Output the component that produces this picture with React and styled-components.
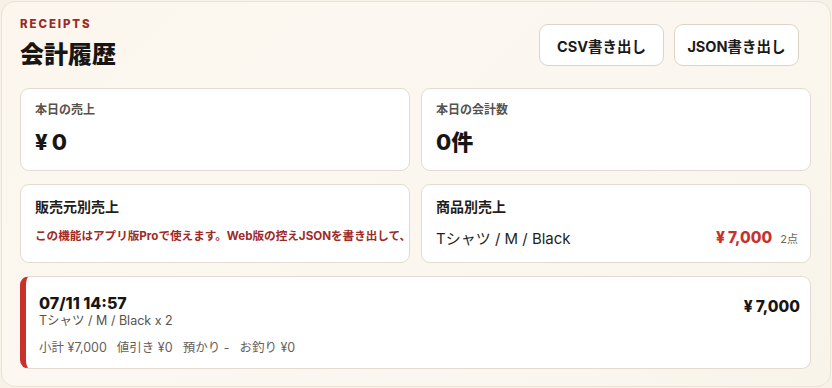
import React from "react";
import styled, { createGlobalStyle } from "styled-components";

const GlobalStyle = createGlobalStyle`
  html, body {
    margin: 0;
    padding: 0;
    background: #f7f1e8;
  }
  body {
    font-family: "Inter", "Noto Sans CJK JP", sans-serif;
    color: #1c1a18;
  }
  * {
    box-sizing: border-box;
  }
`;

const Panel = styled.section`
  margin: 1px;
  height: 386px;
  border: 1px solid #ebe3d6;
  border-radius: 14px;
  background: linear-gradient(135deg, #fcf6ee 0%, #fbf7f0 60%, #f9f4ea 100%);
  padding: 15px 19px 0 18px;
  overflow: hidden;
`;

const Header = styled.header`
  display: flex;
  justify-content: space-between;
  align-items: flex-start;
  padding-right: 12px;
`;

const Eyebrow = styled.div`
  font-size: 11.5px;
  line-height: 14px;
  font-weight: 800;
  letter-spacing: 1.9px;
  color: #9c2a26;
`;

const Title = styled.h1`
  margin: 9px 0 0;
  font-size: 24px;
  line-height: 30px;
  font-weight: 800;
  color: #181614;
`;

const Actions = styled.div`
  display: flex;
  gap: 10px;
  margin-top: 7px;
`;

const Button = styled.button`
  height: 42px;
  min-width: 125px;
  padding: 0 12px;
  background: #fff;
  border: 1px solid #ddd4c6;
  border-radius: 9px;
  font-family: inherit;
  font-size: 14.5px;
  font-weight: 700;
  color: #1c1a18;
  cursor: pointer;
`;

const Grid = styled.div`
  display: grid;
  grid-template-columns: 1fr 1fr;
  column-gap: 11px;
  row-gap: 13px;
  margin-top: 18px;
`;

const Card = styled.div`
  background: #fff;
  border: 1px solid #e3dbcf;
  border-radius: 9px;
  padding: ${(p) => (p.stat ? "13px 14px 14px" : "13px 12px 13px 14px")};
  min-width: 0;
  overflow: hidden;
`;

const StatLabel = styled.div`
  font-size: 12px;
  line-height: 16px;
  font-weight: 600;
  color: #57524c;
`;

const StatValue = styled.div`
  margin-top: 10px;
  font-size: 22px;
  line-height: 28px;
  font-weight: 800;
  color: #181614;
`;

const Yen = styled.span`
  padding-right: ${(p) => p.gap || 2}px;
`;

const CardTitle = styled.div`
  font-size: 14px;
  line-height: 18px;
  font-weight: 700;
  color: #1f1c19;
`;

const Notice = styled.div`
  margin-top: 12px;
  font-size: 11.6px;
  line-height: 16px;
  font-weight: 700;
  color: #9e2a25;
  white-space: nowrap;
`;

const ProductRow = styled.div`
  margin-top: 12px;
  display: flex;
  align-items: center;
  justify-content: space-between;
  line-height: 20px;
`;

const ProductName = styled.span`
  font-size: 15px;
  color: #221f1c;
`;

const ProductSum = styled.span`
  display: flex;
  align-items: baseline;
  gap: 8px;
`;

const RedAmount = styled.span`
  font-size: 15.5px;
  font-weight: 800;
  color: #c8322b;
`;

const Count = styled.span`
  font-size: 11px;
  color: #6a645d;
`;

const Receipt = styled.div`
  margin-top: 13px;
  display: flex;
  justify-content: space-between;
  background: #fff;
  border: 1px solid #e3dbcf;
  border-left: 6px solid #c8322b;
  border-radius: 9px;
  padding: 16px 10px 12px 13px;
`;

const ReceiptDate = styled.div`
  font-size: 16px;
  line-height: 20px;
  font-weight: 800;
  color: #181614;
`;

const ReceiptItems = styled.div`
  font-size: 12.5px;
  line-height: 16px;
  color: #57524c;
`;

const Breakdown = styled.div`
  margin-top: 11px;
  display: flex;
  gap: 10px;
  font-size: 12.5px;
  line-height: 16px;
  color: #66605a;
`;

const ReceiptTotal = styled.div`
  margin-top: 4px;
  font-size: 15.5px;
  line-height: 20px;
  font-weight: 800;
  color: #181614;
`;

export default function App() {
  return (
    <>
      <GlobalStyle />
      <Panel>
        <Header>
          <div>
            <Eyebrow>RECEIPTS</Eyebrow>
            <Title>会計履歴</Title>
          </div>
          <Actions>
            <Button>CSV書き出し</Button>
            <Button>JSON書き出し</Button>
          </Actions>
        </Header>

        <Grid>
          <Card stat>
            <StatLabel>本日の売上</StatLabel>
            <StatValue>
              <Yen gap={4}>¥</Yen>0
            </StatValue>
          </Card>
          <Card stat>
            <StatLabel>本日の会計数</StatLabel>
            <StatValue>0件</StatValue>
          </Card>
          <Card>
            <CardTitle>販売元別売上</CardTitle>
            <Notice>
              この機能はアプリ版Proで使えます。Web版の控えJSONを書き出して、アプリで読み込んでください。
            </Notice>
          </Card>
          <Card>
            <CardTitle>商品別売上</CardTitle>
            <ProductRow>
              <ProductName>Tシャツ / M / Black</ProductName>
              <ProductSum>
                <RedAmount>
                  <Yen gap={3}>¥</Yen>7,000
                </RedAmount>
                <Count>2点</Count>
              </ProductSum>
            </ProductRow>
          </Card>
        </Grid>

        <Receipt>
          <div>
            <ReceiptDate>07/11 14:57</ReceiptDate>
            <ReceiptItems>Tシャツ / M / Black x 2</ReceiptItems>
            <Breakdown>
              <span>小計 ¥7,000</span>
              <span>値引き ¥0</span>
              <span>預かり -</span>
              <span>お釣り ¥0</span>
            </Breakdown>
          </div>
          <ReceiptTotal>
            <Yen gap={3}>¥</Yen>7,000
          </ReceiptTotal>
        </Receipt>
      </Panel>
    </>
  );
}
